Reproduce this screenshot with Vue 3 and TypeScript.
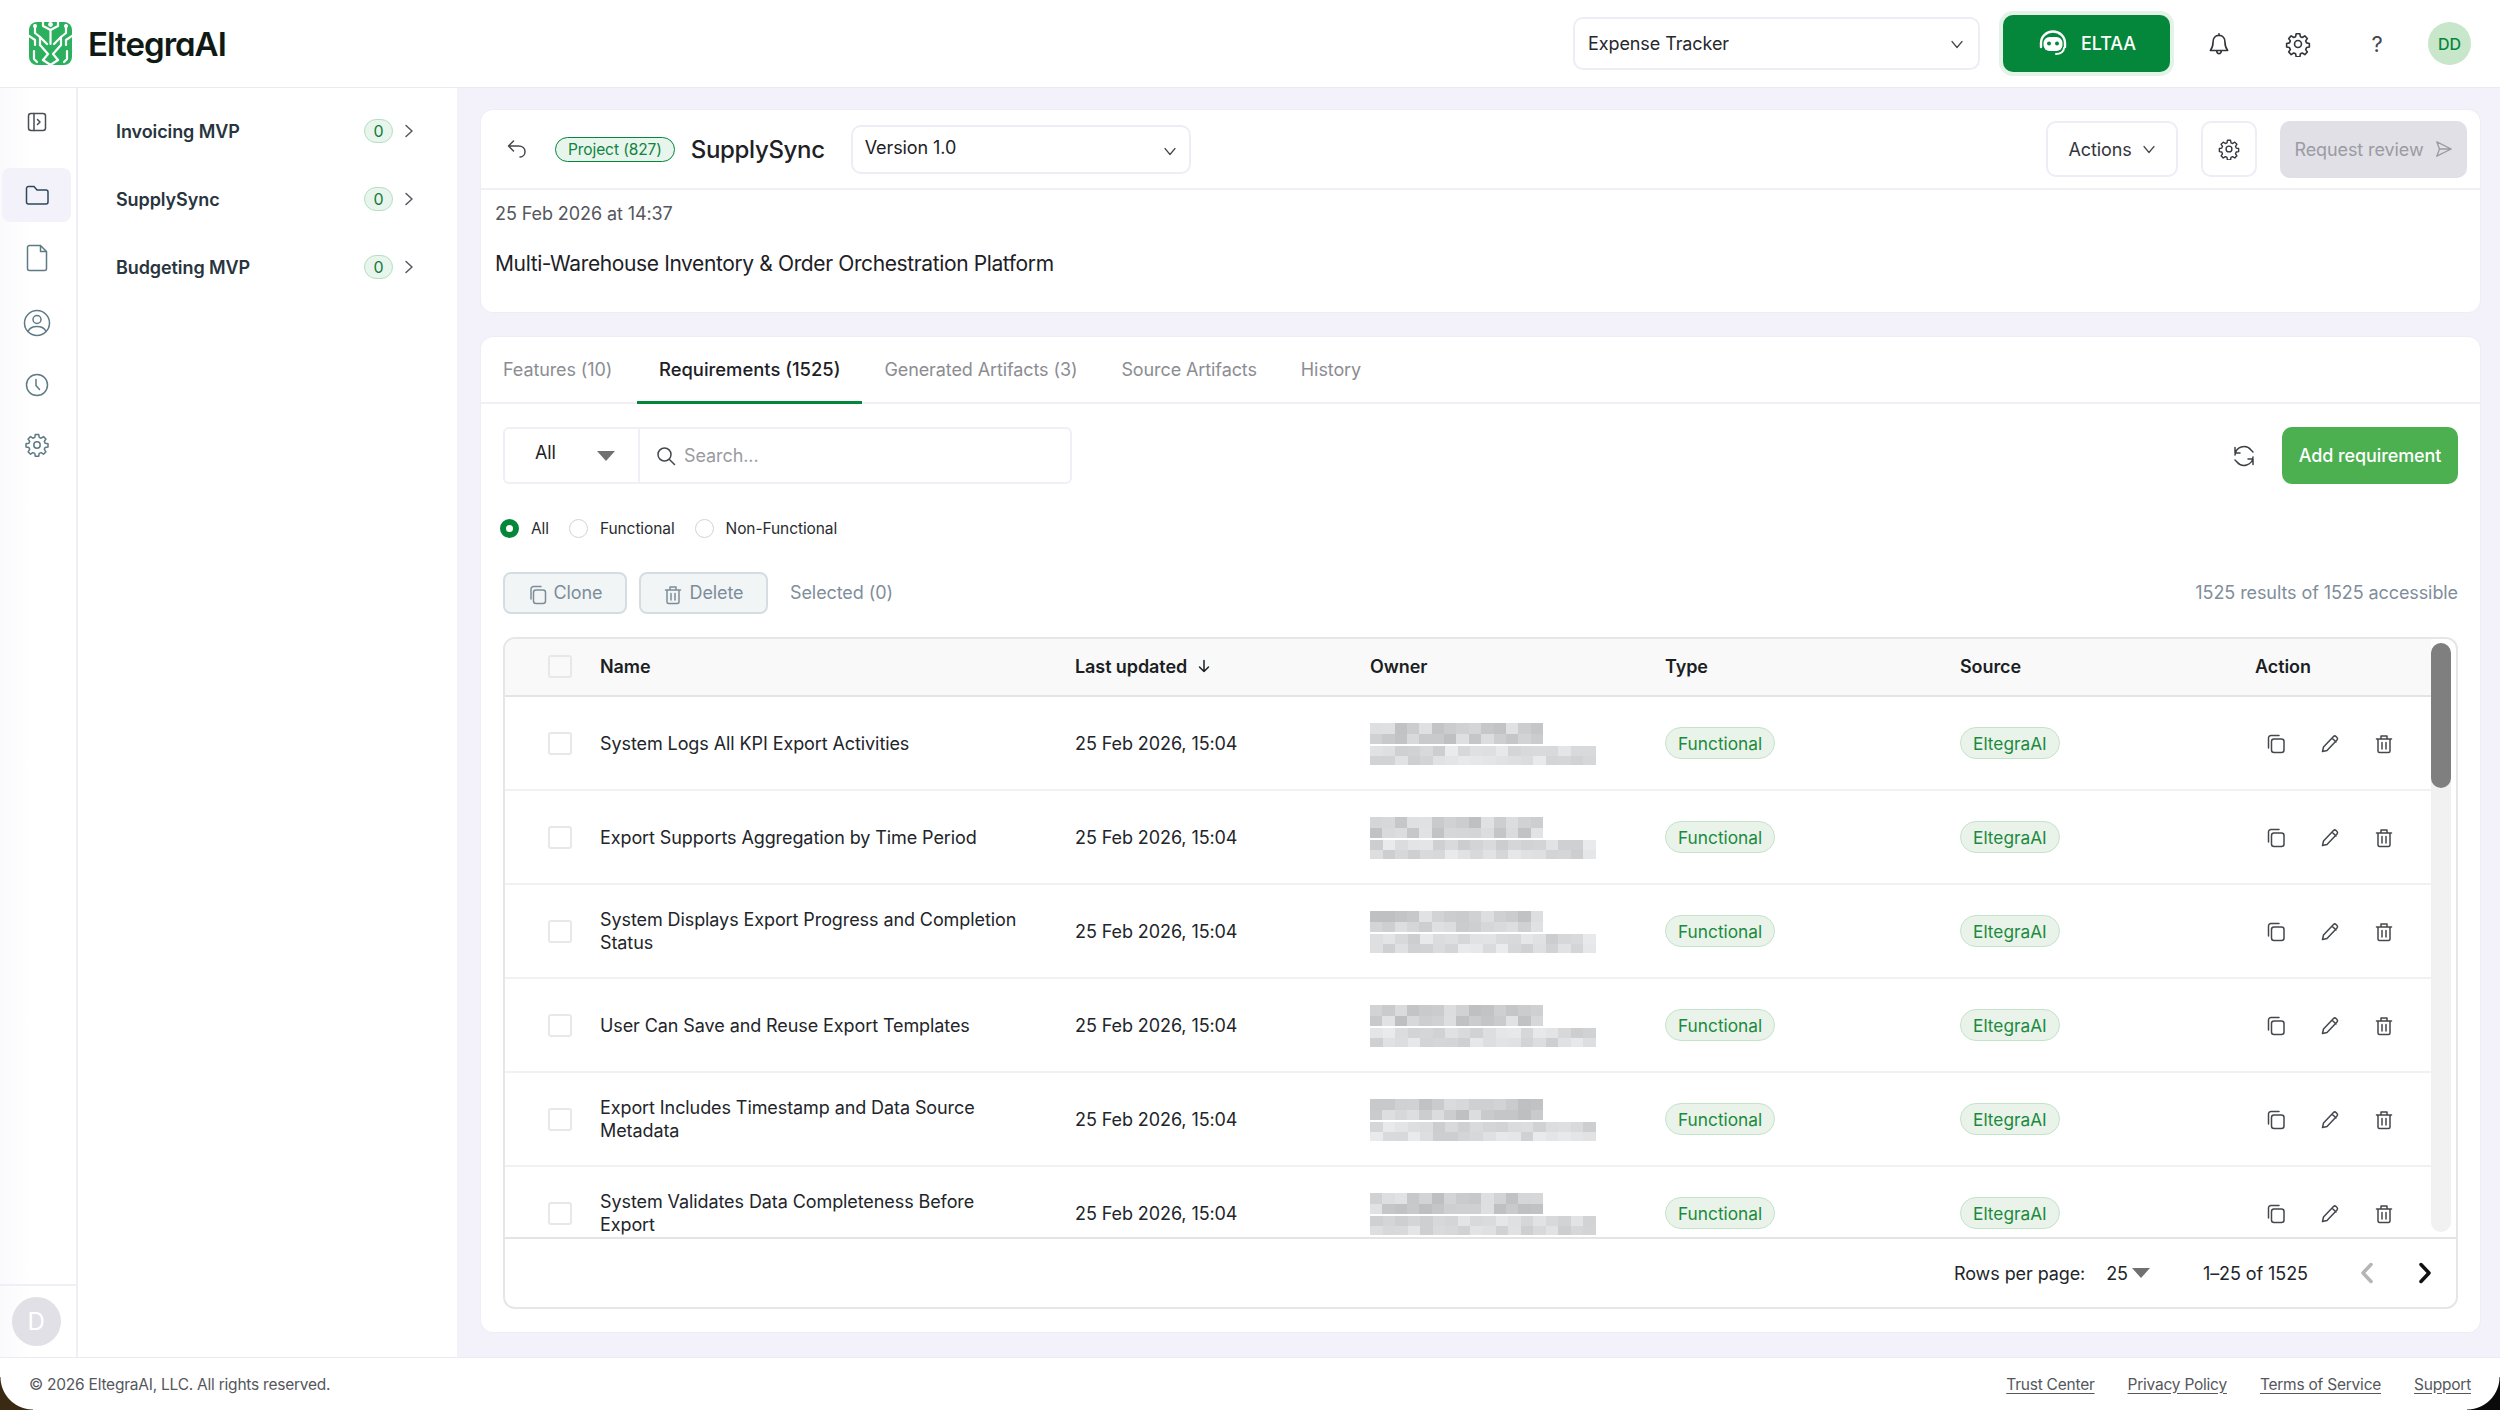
<script setup lang="ts">
interface Row {
  name: string
  upper: string[]
  lower: string[]
}

const names = [
  'System Logs All KPI Export Activities',
  'Export Supports Aggregation by Time Period',
  'System Displays Export Progress and Completion Status',
  'User Can Save and Reuse Export Templates',
  'Export Includes Timestamp and Data Source Metadata',
  'System Validates Data Completeness Before Export',
]

// stand-in for the blurred owner name and email
let seed = 17
function grey(min: number, max: number) {
  seed = (seed * 9301 + 49297) % 233280
  const v = Math.round(min + (seed / 233280) * (max - min))
  return `rgb(${v},${v + 1},${v + 2})`
}

const rows: Row[] = names.map((name) => ({
  name,
  upper: Array.from({ length: 28 }, () => grey(190, 226)),
  lower: Array.from({ length: 36 }, () => grey(204, 234)),
}))

const projects = ['Invoicing MVP', 'SupplySync', 'Budgeting MVP']
const tabs = ['Features (10)', 'Requirements (1525)', 'Generated Artifacts (3)', 'Source Artifacts', 'History']
const footerLinks = ['Trust Center', 'Privacy Policy', 'Terms of Service', 'Support']
</script>

<template>
  <div class="app">
    <header class="topbar">
      <div class="brand">
        <svg class="logo" viewBox="0 0 43 43" aria-hidden="true">
          <rect width="43" height="43" rx="8" fill="#2cb05e" />
          <g fill="none" stroke="#fff" stroke-width="2.2" stroke-linecap="round" stroke-linejoin="round">
            <circle cx="21.5" cy="2.5" r="2.4" fill="#fff" stroke="none" />
            <path d="M14 0v4l7.5 4 7.5-4V0" />
            <path d="M21.5 8v14" />
            <path d="M6 3v8l5 4v8l8 9-5 6" />
            <path d="M37 3v8l-5 4v8l-8 9 5 6" />
            <path d="M0 14l6 4v5M43 14l-6 4v5" />
            <path d="M11 15l7 7M32 15l-7 7" />
            <path d="M5 29v8l3 3M38 29v8l-3 3" />
            <path d="M14 38l7.5 5 7.5-5" />
          </g>
          <circle cx="6" cy="4" r="2" fill="#fff" />
          <circle cx="37" cy="4" r="2" fill="#fff" />
        </svg>
        <span class="wordmark">EltegraAI</span>
      </div>
      <div class="top-actions">
        <div class="select project-select">
          <span>Expense Tracker</span>
          <svg class="chev" viewBox="0 0 14 14"><path d="M2 4.500l5 6 5-6" /></svg>
        </div>
        <button class="eltaa">
          <svg viewBox="0 0 32 32" width="32" height="32" aria-hidden="true">
            <path d="M4 19v-4C4 8.500 9.300 3.500 16 3.500S28 8.500 28 15v4" fill="none" stroke="#fff" stroke-width="2.4" />
            <rect x="6.500" y="9" width="19" height="14" rx="6" fill="#fff" stroke="none" />
            <circle cx="12" cy="15.500" r="2" fill="#04873a" stroke="none" />
            <circle cx="20" cy="15.500" r="2" fill="#04873a" stroke="none" />
            <path d="M27 20c0 4-4 6-8 6" fill="none" stroke="#fff" stroke-width="2" />
          </svg>
          <span>ELTAA</span>
        </button>
        <svg class="top-icon bell" viewBox="0 0 24 24"><path d="M12 2.500v1.600M12 4c-3.500 0-5.500 2.700-5.500 6.200 0 4-1 6-2.500 7.800h16c-1.500-1.800-2.500-3.800-2.500-7.800C17.500 6.700 15.500 4 12 4zM9.800 18.200c.2 1.700 1 2.800 2.200 2.800s2-1.100 2.200-2.800" /></svg>
        <svg class="top-icon gear" viewBox="0 0 24 24"><circle cx="12" cy="12" r="3.200" /><path d="M10.300 2.500h3.400l.5 2.700 1.800.8 2.300-1.500 2.300 2.400-1.500 2.200.8 1.900 2.600.5v3.300l-2.600.5-.8 1.900 1.500 2.200-2.300 2.400-2.300-1.500-1.800.8-.5 2.700h-3.400l-.5-2.700-1.800-.8-2.300 1.500-2.300-2.400 1.500-2.200-.8-1.900-2.600-.5v-3.300l2.600-.5.8-1.900-1.500-2.200 2.300-2.400 2.300 1.500 1.800-.8z" /></svg>
        <span class="help">?</span>
        <span class="avatar">DD</span>
      </div>
    </header>

    <div class="middle">
      <nav class="rail">
        <div class="rail-top">
          <div class="rail-item toggle">
            <svg viewBox="0 0 20 20" width="20" height="20"><rect x="1.500" y="1.500" width="17" height="17" rx="2.500" /><path d="M7 1.500v17M10.500 7.500l2.500 2.500-2.500 2.500" /></svg>
          </div>
          <div class="rail-item active">
            <svg viewBox="0 0 24 22" width="24" height="22"><path d="M1.500 4.500a2 2 0 0 1 2-2h5.500l3 3.500h9a2 2 0 0 1 2 2v10a2 2 0 0 1-2 2h-17.500a2 2 0 0 1-2-2z" /></svg>
          </div>
          <div class="rail-item doc">
            <svg viewBox="0 0 22 28" width="22" height="28"><path d="M3.500 1.500h11l6 6v17a2 2 0 0 1-2 2h-15a2 2 0 0 1-2-2v-21a2 2 0 0 1 2-2zM14.500 1.500v6h6" /></svg>
          </div>
          <div class="rail-item user">
            <svg viewBox="0 0 28 28" width="28" height="28"><circle cx="14" cy="14" r="12.500" /><circle cx="14" cy="10.500" r="4" /><path d="M5 22.500c1.500-3.500 5-5 9-5s7.500 1.500 9 5" /></svg>
          </div>
          <div class="rail-item">
            <svg viewBox="0 0 24 24" width="24" height="24"><circle cx="12" cy="12" r="10.500" /><path d="M11 6.500v6l3.500 4" /></svg>
          </div>
          <div class="rail-item settings">
            <svg viewBox="0 0 24 24" width="24" height="24"><circle cx="12" cy="12" r="3.200" /><path d="M10.300 1.500h3.400l.5 2.900 1.900.8 2.400-1.600 2.400 2.400-1.600 2.400.8 1.900 2.900.5v3.200l-2.900.5-.8 1.900 1.600 2.400-2.400 2.400-2.400-1.600-1.900.8-.5 2.900h-3.400l-.5-2.900-1.900-.8-2.400 1.600-2.400-2.400 1.600-2.400-.8-1.900-2.900-.5v-3.200l2.900-.5.8-1.900-1.600-2.400 2.400-2.400 2.400 1.600 1.900-.8z" /></svg>
          </div>
        </div>
        <div class="rail-bottom"><span class="rail-avatar">D</span></div>
      </nav>

      <aside class="projects">
        <div v-for="p in projects" :key="p" class="project">
          <span class="project-name">{{ p }}</span>
          <span class="count">0</span>
          <svg class="project-chev" viewBox="0 0 10 14"><path d="M2 1.500l6 5.500-6 5.500" /></svg>
        </div>
      </aside>

      <main class="main">
        <section class="card summary">
          <div class="summary-head">
            <svg class="back" viewBox="0 0 22 22"><path d="M7.500 3L2.500 8l5 5M2.500 8h10c4 0 6.500 2.500 6.500 5.500S17 19 14 19" /></svg>
            <span class="project-tag">Project (827)</span>
            <span class="title">SupplySync</span>
            <div class="select version-select">
              <span>Version 1.0</span>
              <svg class="chev" viewBox="0 0 14 14"><path d="M2 4.500l5 6 5-6" /></svg>
            </div>
            <div class="head-right">
              <button class="ghost actions-btn">
                Actions
                <svg class="chev" viewBox="0 0 14 14"><path d="M2 4.500l5 6 5-6" /></svg>
              </button>
              <button class="ghost gear-btn">
                <svg class="top-icon small-gear" viewBox="0 0 24 24"><circle cx="12" cy="12" r="3.200" /><path d="M10.300 2.500h3.400l.5 2.700 1.800.8 2.300-1.500 2.300 2.400-1.500 2.200.8 1.900 2.600.5v3.300l-2.600.5-.8 1.900 1.500 2.200-2.300 2.400-2.300-1.500-1.800.8-.5 2.700h-3.400l-.5-2.700-1.800-.8-2.300 1.500-2.300-2.400 1.500-2.200-.8-1.900-2.600-.5v-3.300l2.600-.5.8-1.900-1.500-2.200 2.300-2.400 2.300 1.500 1.800-.8z" /></svg>
              </button>
              <button class="review">
                Request review
                <svg viewBox="0 0 20 20" width="18" height="18"><path d="M2 2l16 8-16 8 3-8zM5 10h13" /></svg>
              </button>
            </div>
          </div>
          <div class="summary-body">
            <div class="date">25 Feb 2026 at 14:37</div>
            <div class="desc">Multi-Warehouse Inventory &amp; Order Orchestration Platform</div>
          </div>
        </section>

        <section class="card content">
          <div class="tabs">
            <div v-for="(t, i) in tabs" :key="t" class="tab" :class="{ current: i === 1 }">{{ t }}</div>
          </div>
          <div class="panel">
            <div class="filter-row">
              <div class="search-group">
                <div class="kind"><span>All</span><i class="caret"></i></div>
                <div class="search">
                  <svg viewBox="0 0 20 20" width="20" height="20"><circle cx="8.500" cy="8.500" r="6.500" /><path d="M13.500 13.500l5 5" /></svg>
                  <span>Search...</span>
                </div>
              </div>
              <svg class="refresh" viewBox="0 0 24 24"><path d="M3 11a9 9 0 0 1 16-5l2 2M21 13a9 9 0 0 1-16 5l-2-2M3 3.500V9h5M21 20.500V15h-5" /></svg>
              <button class="add">Add requirement</button>
            </div>

            <div class="radios">
              <label class="radio"><i class="dot on"></i>All</label>
              <label class="radio"><i class="dot"></i>Functional</label>
              <label class="radio"><i class="dot"></i>Non-Functional</label>
            </div>

            <div class="bulk-row">
              <button class="bulk clone">
                <svg viewBox="0 0 20 20" width="20" height="20"><rect x="5.500" y="5" width="12" height="13.500" rx="2.500" /><path d="M3 14V4a2.500 2.500 0 0 1 2.500-2.500H13" /></svg>
                Clone
              </button>
              <button class="bulk delete">
                <svg viewBox="0 0 20 20" width="20" height="20"><path d="M2.500 5h15M7 5V2h6v3M4 5v12a1.500 1.500 0 0 0 1.500 1.500h9A1.500 1.500 0 0 0 16 17V5M8 8.500v6.500M12 8.500v6.500" /></svg>
                Delete
              </button>
              <span class="selected">Selected (0)</span>
              <span class="results">1525 results of 1525 accessible</span>
            </div>

            <div class="table">
              <div class="scroll-area">
                <div class="grid head">
                  <div class="check-cell"><i class="check"></i></div>
                  <div>Name</div>
                  <div class="sorted">
                    Last updated
                    <svg viewBox="0 0 14 14" width="14" height="14"><path d="M7 1.500v11M2.500 8L7 12.500 11.500 8" /></svg>
                  </div>
                  <div>Owner</div>
                  <div>Type</div>
                  <div>Source</div>
                  <div>Action</div>
                </div>
                <div v-for="r in rows" :key="r.name" class="grid row">
                  <div class="check-cell"><i class="check"></i></div>
                  <div class="name">{{ r.name }}</div>
                  <div>25 Feb 2026, 15:04</div>
                  <div class="owner">
                    <div class="mosaic upper"><i v-for="(c, i) in r.upper" :key="i" :style="{ background: c }"></i></div>
                    <div class="mosaic lower"><i v-for="(c, i) in r.lower" :key="i" :style="{ background: c }"></i></div>
                  </div>
                  <div><span class="pill">Functional</span></div>
                  <div><span class="pill">EltegraAI</span></div>
                  <div class="row-actions">
                    <svg viewBox="0 0 20 20" width="20" height="20"><rect x="5.500" y="5" width="12.500" height="13.500" rx="2.500" /><path d="M2.500 14V4A2.500 2.500 0 0 1 5 1.500h8" /></svg>
                    <svg viewBox="0 0 20 20" width="20" height="20"><path d="M2.500 17.500l1-4.500L13.500 2.500a1.800 1.800 0 0 1 2.500 0l1 1a1.800 1.800 0 0 1 0 2.500L7 16.500zM12 4l4 4" /></svg>
                    <svg viewBox="0 0 20 20" width="20" height="20"><path d="M2.500 5h15M7 5V2h6v3M4 5v12a1.500 1.500 0 0 0 1.500 1.500h9A1.500 1.500 0 0 0 16 17V5M8 8.500v6.500M12 8.500v6.500" /></svg>
                  </div>
                </div>
                <div class="scroll-track"><div class="scroll-thumb"></div></div>
              </div>
              <div class="pager">
                <span>Rows per page:</span>
                <span class="per-page">25<i class="caret"></i></span>
                <span class="range">1–25 of 1525</span>
                <svg class="page-chev off" viewBox="0 0 14 22"><path d="M11 2.500L3 11l8 8.500" /></svg>
                <svg class="page-chev next" viewBox="0 0 14 22"><path d="M3 2.500L11 11l-8 8.500" /></svg>
              </div>
            </div>
          </div>
        </section>
      </main>
    </div>

    <footer class="footer">
      <span>© 2026 EltegraAI, LLC. All rights reserved.</span>
      <div class="footer-links">
        <a v-for="l in footerLinks" :key="l">{{ l }}</a>
      </div>
    </footer>
    <i class="corner left"></i>
    <i class="corner right"></i>
  </div>
</template>

<style>
body {
  background: #fff;
}
</style>

<style scoped>
.app {
  position: relative;
  width: 2500px;
  height: 1410px;
  overflow: hidden;
  display: flex;
  flex-direction: column;
  background: #fff;
  font-family: Inter, "Liberation Sans", sans-serif;
  font-size: 18px;
  letter-spacing: -0.09px;
  color: #1d2126;
}
svg {
  fill: none;
  stroke: currentColor;
  stroke-width: 1.5;
  stroke-linecap: round;
  stroke-linejoin: round;
  flex: none;
}
button {
  font: inherit;
  letter-spacing: inherit;
  cursor: pointer;
}

/* top bar */
.topbar {
  height: 88px;
  flex: none;
  box-sizing: border-box;
  border-bottom: 1px solid #ecebf3;
  display: flex;
  align-items: center;
  justify-content: space-between;
  padding: 0 29px;
}
.brand {
  display: flex;
  align-items: center;
  gap: 16px;
}
.logo {
  width: 43px;
  height: 43px;
  stroke: none;
}
.wordmark {
  font-size: 33px;
  font-weight: 600;
  letter-spacing: -0.03em;
  color: #101a15;
  font-feature-settings: "cv11";
}
.top-actions {
  display: flex;
  align-items: center;
}
.select {
  box-sizing: border-box;
  background: #fff;
  border: 2px solid #eeedf5;
  border-radius: 10px;
  display: flex;
  align-items: center;
  justify-content: space-between;
}
.chev {
  width: 14px;
  height: 14px;
  stroke: #44474c;
  stroke-width: 1.2;
}
.project-select {
  width: 407px;
  height: 53px;
  padding: 0 14px 0 13px;
  color: #26282c;
}
.eltaa {
  width: 167px;
  height: 57px;
  margin-left: 23px;
  background: #04873a;
  border: 0;
  border-radius: 10px;
  box-shadow: 0 0 0 4px #e3f3e7;
  color: #fff;
  font-weight: 500;
  display: flex;
  align-items: center;
  justify-content: center;
  gap: 12px;
}
.top-icon {
  width: 26px;
  height: 26px;
  color: #33363b;
}
.top-icon.bell {
  margin-left: 36px;
}
.top-icon.gear {
  margin-left: 53px;
}
.help {
  width: 26px;
  margin-left: 53px;
  text-align: center;
  font-size: 22px;
  color: #44474c;
}
.avatar {
  width: 43px;
  height: 43px;
  margin-left: 38px;
  border-radius: 50%;
  background: #c8e6c9;
  color: #04873a;
  font-size: 16px;
  font-weight: 500;
  display: flex;
  align-items: center;
  justify-content: center;
}

.middle {
  flex: 1;
  min-height: 0;
  display: flex;
}

/* icon rail */
.rail {
  width: 78px;
  flex: none;
  box-sizing: border-box;
  border-right: 2px solid #f0eff8;
  display: flex;
  flex-direction: column;
  justify-content: space-between;
  background: linear-gradient(90deg, #fafafd, #fff 40%);
}
.rail-top {
  display: flex;
  flex-direction: column;
  gap: 8px;
  padding: 6px 5px 0 2px;
}
.rail-item {
  height: 54px;
  display: flex;
  align-items: center;
  justify-content: center;
  color: #5d7a85;
}
.rail-item.toggle {
  height: 56px;
  color: #4a4e55;
}
.rail-item.active {
  background: #f3f2fb;
  border-radius: 8px;
  color: #2b4a5c;
  margin-top: 10px;
}
.rail-item.doc {
  margin-top: 1px;
}
.rail-item.user {
  margin-top: 3px;
}
.rail-item.settings {
  margin-top: -2px;
}
.rail-bottom {
  height: 73px;
  box-sizing: border-box;
  border-top: 2px solid #f0eff8;
  padding-right: 4px;
  display: flex;
  align-items: center;
  justify-content: center;
}
.rail-avatar {
  width: 49px;
  height: 49px;
  border-radius: 50%;
  background: #e1e0e6;
  color: #fff;
  font-size: 24px;
  display: flex;
  align-items: center;
  justify-content: center;
}

/* project list */
.projects {
  width: 379px;
  flex: none;
  box-sizing: border-box;
  padding: 9px 0 0 38px;
}
.project {
  height: 68px;
  display: flex;
  align-items: center;
  font-weight: 600;
  color: #28343e;
}
.project-name {
  width: 248px;
}
.count {
  width: 29px;
  height: 24px;
  box-sizing: border-box;
  border: 1.5px solid #b5dfc2;
  border-radius: 12px;
  background: #e8f5ec;
  color: #157a3a;
  font-size: 16px;
  font-weight: 400;
  display: flex;
  align-items: center;
  justify-content: center;
}
.project-chev {
  width: 10px;
  height: 14px;
  margin-left: 11px;
  stroke: #55595f;
}

/* main column */
.main {
  flex: 1;
  min-width: 0;
  box-sizing: border-box;
  background: #f3f2fb;
  padding: 22px 20px 25px 24px;
  display: flex;
  flex-direction: column;
  gap: 25px;
}
.card {
  background: #fff;
  border-radius: 12px;
  box-shadow: 0 0 0 1px #eeedf6;
}
.summary {
  height: 202px;
  flex: none;
}
.summary-head {
  height: 80px;
  box-sizing: border-box;
  border-bottom: 2px solid #f0eff6;
  display: flex;
  align-items: center;
  padding: 0 13px 0 25px;
}
.back {
  width: 22px;
  height: 22px;
  color: #44474c;
}
.project-tag {
  height: 25px;
  margin-left: 27px;
  padding: 0 12px;
  box-sizing: border-box;
  border: 1.5px solid #04873a;
  border-radius: 13px;
  background: #e8f5ec;
  color: #0f8440;
  font-size: 15.500px;
  display: flex;
  align-items: center;
}
.title {
  margin-left: 16px;
  font-size: 24px;
  font-weight: 500;
  letter-spacing: -0.34px;
}
.version-select {
  width: 340px;
  height: 49px;
  margin-left: 26px;
  padding: 0 12px 4px;
}
.version-select .chev {
  margin-top: 8px;
}
.head-right {
  margin-left: auto;
  display: flex;
  align-items: center;
  gap: 23px;
}
.ghost {
  height: 56px;
  box-sizing: border-box;
  background: #fff;
  border: 2px solid #eeedf5;
  border-radius: 10px;
  color: #33363b;
  display: flex;
  align-items: center;
  justify-content: center;
  gap: 10px;
}
.actions-btn {
  width: 132px;
}
.gear-btn {
  width: 56px;
}
.small-gear {
  width: 22px;
  height: 22px;
}
.review {
  width: 187px;
  height: 57px;
  background: #e1e0e6;
  border: 0;
  border-radius: 10px;
  color: #9b9ba3;
  display: flex;
  align-items: center;
  justify-content: center;
  gap: 11px;
}
.summary-body {
  padding: 13px 14px;
}
.date {
  height: 22px;
  line-height: 22px;
  color: #55575c;
}
.desc {
  margin-top: 24px;
  line-height: 30px;
  font-size: 21px;
  letter-spacing: -0.38px;
  color: #1d2126;
}

/* requirements card */
.content {
  flex: 1;
  min-height: 0;
  display: flex;
  flex-direction: column;
}
.tabs {
  height: 67px;
  flex: none;
  box-sizing: border-box;
  border-bottom: 2px solid #f0eff6;
  display: flex;
}
.tab {
  padding: 0 22px;
  height: 67px;
  box-sizing: border-box;
  border-bottom: 3px solid transparent;
  display: flex;
  align-items: center;
  letter-spacing: -0.1px;
  color: #8b8d92;
}
.tab:first-child {
  min-width: 156px;
}
.tab.current {
  font-size: 18.400px;
  letter-spacing: 0;
  color: #1d2126;
  font-weight: 500;
  border-bottom-color: #04873a;
}
.panel {
  flex: 1;
  min-height: 0;
  padding: 23px 22px 23px;
  display: flex;
  flex-direction: column;
}
.filter-row {
  height: 57px;
  flex: none;
  display: flex;
  align-items: center;
}
.search-group {
  width: 569px;
  height: 57px;
  box-sizing: border-box;
  border: 2px solid #f0eff6;
  border-radius: 6px;
  display: flex;
}
.kind {
  width: 135px;
  flex: none;
  box-sizing: border-box;
  border-right: 2px solid #f0eff6;
  padding-left: 30px;
  display: flex;
  align-items: center;
  gap: 41px;
}
.kind span {
  margin-top: -6px;
}
.caret {
  display: inline-block;
  width: 0;
  height: 0;
  border-left: 9px solid transparent;
  border-right: 9px solid transparent;
  border-top: 10px solid #707070;
}
.search {
  flex: 1;
  padding-left: 16px;
  display: flex;
  align-items: center;
  gap: 8px;
  color: #9a9ba0;
}
.search svg {
  color: #44474c;
}
.refresh {
  width: 24px;
  height: 24px;
  margin-left: auto;
  margin-right: 26px;
  color: #3c4046;
}
.add {
  width: 176px;
  height: 57px;
  background: #4caf50;
  border: 0;
  border-radius: 10px;
  color: #fff;
  font-weight: 500;
}
.radios {
  height: 30px;
  flex: none;
  margin-top: 29px;
  display: flex;
  align-items: center;
  gap: 23px;
  font-size: 15.500px;
  color: #2a2c30;
}
.radio {
  display: flex;
  align-items: center;
  gap: 12px;
}
.dot {
  width: 19px;
  height: 19px;
  margin-left: -3px;
  box-sizing: border-box;
  border: 1.5px solid #d2d3d8;
  border-radius: 50%;
}
.dot.on {
  border: 6px solid #04873a;
}
.bulk-row {
  height: 42px;
  flex: none;
  margin-top: 29px;
  display: flex;
  align-items: center;
}
.bulk {
  height: 42px;
  box-sizing: border-box;
  padding-bottom: 2px;
  background: #f2f5f6;
  border: 2px solid #d5dde2;
  border-radius: 8px;
  color: #7c8d9a;
  display: flex;
  align-items: center;
  justify-content: center;
  gap: 6px;
}
.bulk svg {
  margin-top: 4px;
}
.bulk.clone {
  width: 124px;
}
.bulk.delete {
  width: 129px;
  margin-left: 12px;
}
.selected {
  margin: -2px 0 0 22px;
  color: #7f8e9b;
}
.results {
  margin: -2px 0 0 auto;
  color: #7f8e9b;
}

/* table */
.table {
  flex: 1;
  min-height: 0;
  margin-top: 23px;
  box-sizing: border-box;
  border: 2px solid #e6e6e6;
  border-radius: 12px;
  display: flex;
  flex-direction: column;
  overflow: hidden;
}
.scroll-area {
  position: relative;
  height: 540px;
  flex: none;
  overflow: hidden;
  padding-right: 25px;
  padding-top: 58px;
}
.grid {
  display: grid;
  grid-template-columns: 95px 475px 295px 295px 295px 295px 1fr;
  align-items: center;
}
.head {
  position: absolute;
  top: 0;
  left: 0;
  right: 25px;
  height: 58px;
  box-sizing: border-box;
  padding-bottom: 2px;
  background: #f9f9f9;
  border-bottom: 2px solid #e4e4e4;
  font-weight: 600;
  color: #1b1f24;
}
.sorted {
  display: flex;
  align-items: center;
  gap: 10px;
}
.row {
  height: 94px;
  box-sizing: border-box;
  border-bottom: 2px solid #f1f1f1;
  color: #22252a;
}
.name {
  padding-right: 45px;
  line-height: 23px;
}
.check-cell {
  display: flex;
  justify-content: center;
  padding-left: 14px;
  box-sizing: border-box;
}
.check {
  width: 24px;
  height: 23px;
  box-sizing: border-box;
  border: 2px solid #e8e8e8;
  border-radius: 3px;
}
.owner {
  display: flex;
  flex-direction: column;
  gap: 2px;
  margin-top: 2px;
}
.mosaic {
  display: grid;
}
.mosaic.upper {
  width: 173px;
  height: 21px;
  grid-template-columns: repeat(14, 1fr);
}
.mosaic.lower {
  width: 226px;
  height: 19px;
  grid-template-columns: repeat(18, 1fr);
}
.pill {
  display: inline-flex;
  align-items: center;
  height: 32px;
  padding: 0 12px;
  box-sizing: border-box;
  border: 1.5px solid #c5e3cb;
  border-radius: 16px;
  background: #e9f3ea;
  color: #1b8a3e;
  font-size: 17.300px;
  letter-spacing: 0;
}
.row-actions {
  display: flex;
  align-items: center;
  gap: 34px;
  padding: 2px 0 0 11px;
  color: #44474c;
}
.scroll-track {
  position: absolute;
  top: 4px;
  right: 5px;
  width: 20px;
  height: 589px;
  background: #f1f1f1;
  border-radius: 10px;
}
.scroll-thumb {
  height: 145px;
  background: #7f7f7f;
  border-radius: 10px;
}
.pager {
  flex: 1;
  min-height: 0;
  box-sizing: border-box;
  border-top: 2px solid #e4e4e4;
  display: flex;
  align-items: center;
  padding-left: 1449px;
  color: #22252a;
}
.per-page {
  margin-left: 21px;
  display: flex;
  align-items: center;
  gap: 4px;
}
.range {
  margin-left: 53px;
}
.page-chev {
  width: 14px;
  height: 22px;
  margin-left: 52px;
  stroke: #111;
  stroke-width: 3.500;
}
.page-chev.next {
  margin-left: 44px;
}
.page-chev.off {
  stroke: #b5b5b5;
}

/* footer */
.footer {
  height: 53px;
  flex: none;
  box-sizing: border-box;
  border-top: 1px solid #ecebf3;
  display: flex;
  align-items: center;
  justify-content: space-between;
  padding: 0 29px;
  font-size: 15.500px;
  letter-spacing: -0.23px;
  color: #55575c;
}
.footer-links {
  display: flex;
  gap: 33px;
}
.footer-links a {
  text-decoration: underline;
  text-underline-offset: 3px;
}
.corner {
  position: absolute;
  bottom: 0;
  width: 33px;
  height: 33px;
}
.corner.left {
  left: 0;
  background: radial-gradient(circle at 100% 0, transparent 32px, #3a2a14 33px);
}
.corner.right {
  right: 0;
  background: radial-gradient(circle at 0 0, transparent 32px, #0a0a0a 33px);
}
</style>
